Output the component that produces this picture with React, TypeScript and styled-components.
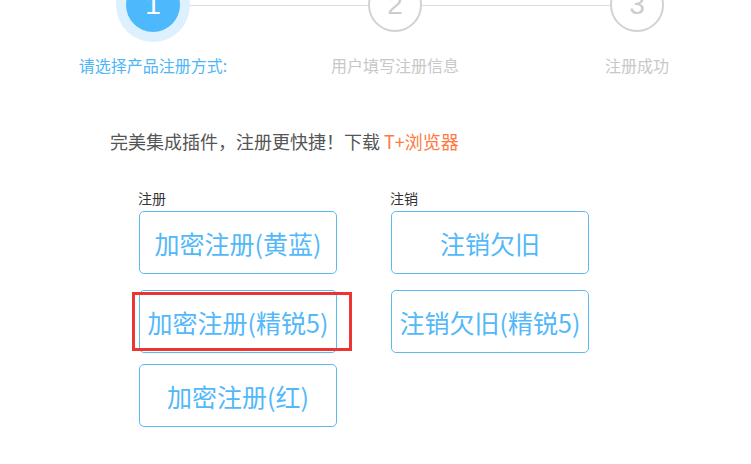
import React from 'react';
import styled, {createGlobalStyle} from 'styled-components';

const GlobalStyle = createGlobalStyle`
  html, body {
    margin: 0;
    padding: 0;
    background: #fff;
    overflow: hidden;
  }
  body {
    font-family: "Noto Sans CJK SC", "Noto Sans", sans-serif;
  }
`

const Page = styled.div`
  width: 751px;
  height: 464px;
  position: relative;
`

const Steps = styled.div`
  display: grid;
  grid-template-columns: repeat(3, 242px);
  margin-top: -22px;
  margin-left: 32px;
`

const Step = styled.div`
  display: flex;
  flex-direction: column;
  align-items: center;
`

const Head = styled.div`
  display: flex;
  align-items: center;
  width: 100%;
`

const Line = styled.div<{ $hide?: boolean }>`
  flex: 1;
  height: 1px;
  background: ${(p) => (p.$hide ? 'transparent' : '#dcdcdc')};
`

const Circle = styled.div<{ $active?: boolean }>`
  position: relative;
  z-index: 1;
  box-sizing: border-box;
  width: 54px;
  height: 54px;
  border-radius: 50%;
  display: flex;
  align-items: center;
  justify-content: center;
  font-family: "Liberation Sans", sans-serif;
  font-size: 28px;
  background: ${(p) => (p.$active ? '#4db9fc' : '#fff')};
  color: ${(p) => (p.$active ? '#fff' : '#cccccc')};
  border: ${(p) => (p.$active ? 'none' : '2px solid #d2d2d2')};
  box-shadow: ${(p) => (p.$active ? '0 0 0 10px #dcf0fe' : 'none')};
`

const StepLabel = styled.div<{ $active?: boolean }>`
  margin-top: 22px;
  font-size: 16px;
  line-height: 22px;
  color: ${(p) => (p.$active ? '#4cb6f8' : '#c8c8c8')};
  white-space: nowrap;
`

const Notice = styled.div`
  margin: 53px 0 0 110px;
  font-size: 18px;
  line-height: 24px;
  color: #555;
`

const Link = styled.span`
  color: #ff7a42;
`

const Groups = styled.div`
  display: flex;
  gap: 54px;
  margin: 35px 0 0 139px;
`

const Group = styled.div`
  display: flex;
  flex-direction: column;
  gap: 16px;
  width: 198px;
`

const GroupHead = styled.div`
  display: flex;
  flex-direction: column;
  gap: 3px;
`

const GroupLabel = styled.div`
  margin-left: -1px;
  font-size: 14px;
  line-height: 20px;
  color: #333;
`

const Button = styled.div<{ $pull?: number }>`
  box-sizing: border-box;
  height: 63px;
  margin-top: ${(p) => (p.$pull ? `-${p.$pull}px` : '0')};
  border: 1px solid #5cbaf3;
  border-radius: 5px;
  display: flex;
  align-items: center;
  justify-content: center;
  font-size: 25px;
  color: #52b8f9;
  white-space: nowrap;
  background: #fff;
`

const Marked = styled.div`
  position: relative;
`

const RedFrame = styled.div`
  position: absolute;
  left: -7px;
  top: 2px;
  width: 220px;
  height: 59px;
  box-sizing: border-box;
  border: 3px solid #ee3333;
  pointer-events: none;
`

const steps = ['请选择产品注册方式:', '用户填写注册信息', '注册成功']

const App: React.FC = () => {
    return (
        <Page>
            <GlobalStyle/>
            <Steps>
                {steps.map((label, i) =>
                    <Step key={label}>
                        <Head>
                            <Line $hide={i === 0}/>
                            <Circle $active={i === 0}>{i + 1}</Circle>
                            <Line $hide={i === steps.length - 1}/>
                        </Head>
                        <StepLabel $active={i === 0}>{label}</StepLabel>
                    </Step>
                )}
            </Steps>

            <Notice>完美集成插件，注册更快捷！下载 <Link>T+浏览器</Link></Notice>

            <Groups>
                <Group>
                    <GroupHead>
                        <GroupLabel>注册</GroupLabel>
                        <Button>加密注册(黄蓝)</Button>
                    </GroupHead>
                    <Marked>
                        <Button>加密注册(精锐5)</Button>
                        <RedFrame/>
                    </Marked>
                    <Button $pull={5}>加密注册(红)</Button>
                </Group>
                <Group>
                    <GroupHead>
                        <GroupLabel>注销</GroupLabel>
                        <Button>注销欠旧</Button>
                    </GroupHead>
                    <Button>注销欠旧(精锐5)</Button>
                </Group>
            </Groups>
        </Page>
    );
};

export default App;
